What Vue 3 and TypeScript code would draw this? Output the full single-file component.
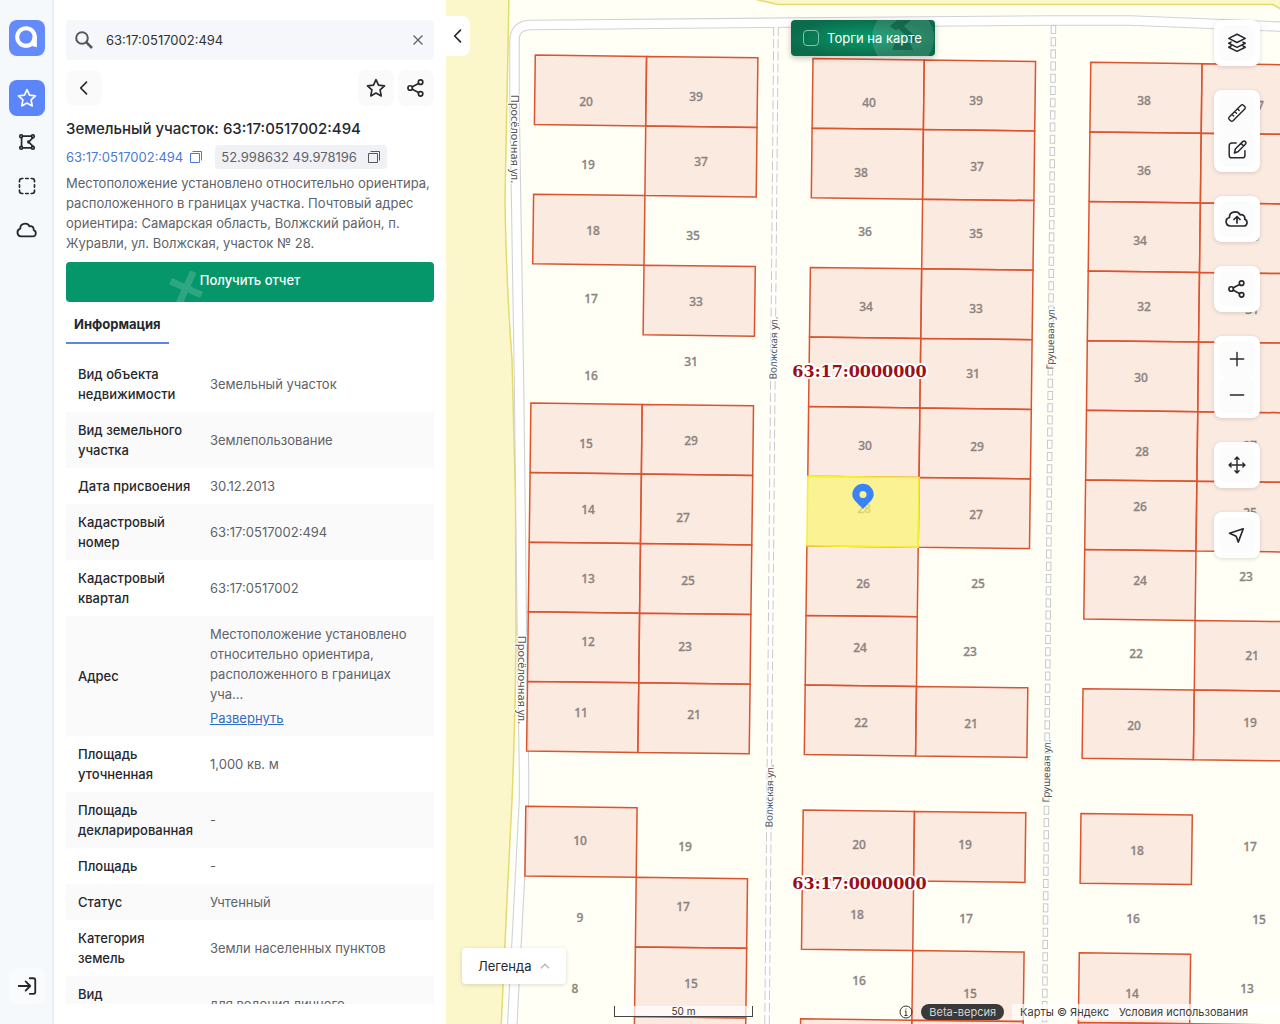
<script setup lang="ts">
import { ref } from 'vue'

interface Row { label: string; value: string; link?: string }

const rows: Row[] = [
  { label: 'Вид объекта недвижимости', value: 'Земельный участок' },
  { label: 'Вид земельного участка', value: 'Землепользование' },
  { label: 'Дата присвоения', value: '30.12.2013' },
  { label: 'Кадастровый номер', value: '63:17:0517002:494' },
  { label: 'Кадастровый квартал', value: '63:17:0517002' },
  { label: 'Адрес', value: 'Местоположение установлено относительно ориентира, расположенного в границах уча...', link: 'Развернуть' },
  { label: 'Площадь уточненная', value: '1,000 кв. м' },
  { label: 'Площадь декларированная', value: '-' },
  { label: 'Площадь', value: '-' },
  { label: 'Статус', value: 'Учтенный' },
  { label: 'Категория\nземель', value: 'Земли населенных пунктов' },
  { label: 'Вид\nразрешенного\nиспользования', value: 'для ведения личного подсобного хозяйства' },
]

const query = ref('63:17:0517002:494')
const auctions = ref(false)

type Point = [number, number]

// Every block is a two-column grid of plots, slightly rotated
const across: Point = [111.3, 1.4]
const down: Point = [-0.87, 69.6]

interface Block { origin: Point; left: number[]; right: number[] }

const blocks: Block[] = [
  { origin: [535.3, 55], left: [0, 2, 5, 6, 7, 8, 9], right: [0, 1, 3, 5, 6, 7, 8, 9] },
  { origin: [813, 58.6], left: [0, 1, 3, 4, 5, 7, 8, 9], right: [0, 1, 2, 3, 4, 5, 6, 9] },
  { origin: [1090.8, 62.3], left: [0, 1, 2, 3, 4, 5, 6, 7, 9], right: [0, 1, 2, 3, 4, 5, 6, 8, 9] },
  { origin: [525.8, 806.3], left: [0], right: [1, 2, 3] },
  { origin: [803.2, 810], left: [0, 1, 3], right: [0, 2, 3] },
  { origin: [1081, 813.6], left: [0, 2, 3], right: [3] },
]

function plot(origin: Point, col: number, row: number): string {
  const corner = (c: number, r: number) =>
    `${(origin[0] + across[0] * c + down[0] * r).toFixed(1)},${(origin[1] + across[1] * c + down[1] * r).toFixed(1)}`
  return [corner(col, row), corner(col + 1, row), corner(col + 1, row + 1), corner(col, row + 1)].join(' ')
}

const plots = blocks.flatMap((b) => [
  ...b.left.map((r) => plot(b.origin, 0, r)),
  ...b.right.map((r) => plot(b.origin, 1, r)),
])
const selected = plot(blocks[1].origin, 0, 6)

// House numbers: x centre, y centre, number
const houses: [number, number, number][] = [
  [586, 101, 20], [696, 96, 39], [588, 164, 19], [701, 161, 37], [593, 230, 18], [693, 235, 35],
  [591, 298, 17], [696, 301, 33], [591, 375, 16], [691, 361, 31], [586, 443, 15], [691, 440, 29],
  [588, 509, 14], [683, 517, 27], [588, 578, 13], [688, 580, 25], [588, 641, 12], [685, 646, 23],
  [581, 712, 11], [694, 714, 21], [580, 840, 10], [685, 846, 19], [580, 917, 9], [683, 906, 17],
  [575, 988, 8], [691, 983, 15],
  [869, 102, 40], [976, 100, 39], [861, 172, 38], [977, 166, 37], [865, 231, 36], [976, 233, 35],
  [866, 306, 34], [976, 308, 33], [973, 373, 31], [865, 445, 30], [977, 446, 29], [864, 508, 28],
  [976, 514, 27], [863, 583, 26], [978, 583, 25], [860, 647, 24], [970, 651, 23], [861, 722, 22],
  [971, 723, 21], [859, 844, 20], [965, 844, 19], [857, 914, 18], [966, 918, 17], [859, 980, 16],
  [970, 993, 15],
  [1144, 100, 38], [1257, 105, 37], [1144, 170, 36], [1140, 240, 34], [1252, 236, 33], [1144, 306, 32],
  [1252, 309, 31], [1141, 377, 30], [1142, 451, 28], [1250, 445, 27], [1140, 506, 26], [1250, 512, 25],
  [1140, 580, 24], [1246, 576, 23], [1136, 653, 22], [1252, 655, 21], [1134, 725, 20], [1250, 722, 19],
  [1137, 850, 18], [1250, 846, 17], [1133, 918, 16], [1259, 919, 15], [1132, 993, 14], [1247, 988, 13],
]

interface Street { name: string; x: number; y: number; turn: number; size: number }

const streets: Street[] = [
  { name: 'Просёлочная ул.', x: 515, y: 139, turn: 90, size: 11 },
  { name: 'Просёлочная ул.', x: 522, y: 680, turn: 90, size: 11 },
  { name: 'Волжская ул.', x: 773, y: 348, turn: -89, size: 10 },
  { name: 'Волжская ул.', x: 769, y: 796, turn: -89, size: 10 },
  { name: 'Грушевая ул.', x: 1050, y: 338, turn: -89, size: 10 },
  { name: 'Грушевая ул.', x: 1046, y: 771, turn: -89, size: 10 },
]
</script>

<template>
  <div class="app">
    <nav class="rail">
      <a class="logo" href="#" aria-label="Главная">
        <svg width="36" height="36" viewBox="0 0 36 36"><circle cx="17" cy="17" r="8.800" fill="none" stroke="#fff" stroke-width="4" /><path d="M24 16h3.800v11.200L21 25.500z" fill="#fff" /></svg>
      </a>
      <button class="rail-btn active" aria-label="Избранное">
        <svg class="ico" width="20" height="20" viewBox="0 0 24 24"><path d="M12 2l3 6.600 7.200.8-5.300 4.900 1.400 7.200L12 18l-6.300 3.500 1.400-7.200L1.800 9.400 9 8.600z" /></svg>
      </button>
      <button class="rail-btn" aria-label="Участок">
        <svg class="ico" width="20" height="20" viewBox="0 0 24 24"><path d="M6.500 5h11M5.500 7v10M6.500 19h11M19 7l-5 5 5 5" /><circle cx="5" cy="5" r="1.700" /><circle cx="19" cy="5" r="1.700" /><circle cx="5" cy="19" r="1.700" /><circle cx="19" cy="19" r="1.700" /><circle cx="14" cy="12" r="1" /></svg>
      </button>
      <button class="rail-btn" aria-label="Выделение">
        <svg class="ico" width="20" height="20" viewBox="0 0 24 24"><path d="M3 7V6a3 3 0 0 1 3-3h1M10.500 3h3M17 3h1a3 3 0 0 1 3 3v1M21 10.500v3M21 17v1a3 3 0 0 1-3 3h-1M13.500 21h-3M7 21H6a3 3 0 0 1-3-3v-1M3 13.500v-3" /></svg>
      </button>
      <button class="rail-btn" aria-label="Облако">
        <svg class="ico" width="22" height="22" viewBox="0 0 24 24"><path d="M5.500 19a4.300 4.300 0 0 1-.8-8.400c-.6-5.800 7.600-7.400 10-2.700 3-.7 5 1.500 4.600 4.300 3.500 1.300 2.800 6.800-.8 6.800z" /></svg>
      </button>
      <button class="rail-btn login" aria-label="Войти">
        <svg class="ico" width="22" height="22" viewBox="0 0 24 24"><path d="M3 12h12M10.500 7l5 5-5 5M15 3.500h4a2 2 0 0 1 2 2v13a2 2 0 0 1-2 2h-4" /></svg>
      </button>
    </nav>

    <aside class="panel">
      <form class="search" @submit.prevent>
        <svg width="20" height="20" viewBox="0 0 20 20" fill="none" stroke="#54585b" stroke-width="2"><circle cx="8" cy="8" r="5.800" /><path d="M12.200 12.200L18 18" stroke-width="2.600" /></svg>
        <input v-model="query" type="text" aria-label="Поиск">
        <button type="button" aria-label="Очистить" @click="query = ''">
          <svg width="12" height="12" viewBox="0 0 12 12" fill="none" stroke="#5d6266" stroke-width="1.300"><path d="M1.500 1.500l9 9M10.500 1.500l-9 9" /></svg>
        </button>
      </form>

      <div class="actions">
        <button class="soft" aria-label="Назад">
          <svg class="ico" width="20" height="20" viewBox="0 0 24 24"><path d="M15 5l-7 7 7 7" /></svg>
        </button>
        <button class="soft push" aria-label="В избранное">
          <svg class="ico" width="20" height="20" viewBox="0 0 24 24"><path d="M12 2l3 6.600 7.200.8-5.300 4.900 1.400 7.200L12 18l-6.300 3.500 1.400-7.200L1.800 9.400 9 8.600z" /></svg>
        </button>
        <button class="soft" aria-label="Поделиться">
          <svg class="ico" width="20" height="20" viewBox="0 0 24 24"><circle cx="5" cy="12" r="2.700" /><circle cx="17.500" cy="5" r="2.700" /><circle cx="17.500" cy="19" r="2.700" /><path d="M7.600 10.500L15 6.500M7.600 13.500l7.400 4" /></svg>
        </button>
      </div>

      <h1>Земельный участок: 63:17:0517002:494</h1>
      <div class="ids">
        <a href="#">63:17:0517002:494</a>
        <button class="copy blue" aria-label="Скопировать номер">
          <svg width="14" height="14" viewBox="0 0 14 14"><path d="M1.500 3.500h9v9h-9zM3.500 1.500h9v9" /></svg>
        </button>
        <span class="chip">
          52.998632 49.978196
          <button class="copy" aria-label="Скопировать координаты">
            <svg width="14" height="14" viewBox="0 0 14 14"><path d="M1.500 3.500h9v9h-9zM3.500 1.500h9v9" /></svg>
          </button>
        </span>
      </div>
      <p class="about">Местоположение установлено относительно ориентира, расположенного в границах участка. Почтовый адрес ориентира: Самарская область, Волжский район, п. Журавли, ул. Волжская, участок № 28.</p>
      <button class="report">
        <svg width="40" height="40" viewBox="0 0 40 40"><path d="M20 8v36M3 26h34" transform="rotate(24 20 26)" stroke="#fff" stroke-opacity=".16" stroke-width="7" /></svg>
        Получить отчет
      </button>
      <div class="tabs"><button class="tab">Информация</button></div>

      <div class="scroll">
        <table>
          <tbody>
            <tr v-for="row in rows" :key="row.label">
              <th scope="row">{{ row.label }}</th>
              <td>
                {{ row.value }}
                <a v-if="row.link" class="more" href="#">{{ row.link }}</a>
              </td>
            </tr>
          </tbody>
        </table>
      </div>
    </aside>

    <main class="map">
      <svg class="canvas" viewBox="446 0 834 1024" preserveAspectRatio="xMinYMin slice">
        <rect x="446" width="2000" height="2000" fill="#fffff6" />
        <g fill="#fbf7cb" stroke="#e3da70" stroke-width="1.500">
          <path d="M440-5H509L505 200Q506 280 512 360L515.500 500L516 640Q515 730 512 800L507 900L501 1030H440z" />
          <path d="M750-2L778 4.500H1273L1284 11V-4H750z" />
        </g>
        <g fill="none" stroke-linejoin="round">
          <path d="M512 1030L524 800V770L522 640L519 380L514.500 100V41Q514.500 25 531 25L800 22.500L1050 20.500L1130 20.500L1290 27" stroke="#d0d3d6" stroke-width="10.500" />
          <path d="M512 1030L524 800V770L522 640L519 380L514.500 100V41Q514.500 25 531 25L800 22.500L1050 20.500L1130 20.500L1290 27" stroke="#fff" stroke-width="8.300" />
          <path d="M776 27L767 1030M1053.500 25L1044.500 1030" stroke="#c8cac9" stroke-width="5.500" stroke-dasharray="9 3.200" />
          <path d="M776 27L767 1030" stroke="#fff" stroke-width="3.500" />
          <path d="M1053.500 26L1044.500 1030" stroke="#fff" stroke-width="3.500" stroke-dasharray="7 5.200" />
        </g>
        <g class="streets">
          <text v-for="(s, i) in streets" :key="i" :transform="`translate(${s.x} ${s.y}) rotate(${s.turn})`" :font-size="s.size" text-anchor="middle" dy="4">{{ s.name }}</text>
        </g>
        <g fill="#f7d9cd" fill-opacity=".55" stroke="#d9542f" stroke-width="1.500">
          <polygon v-for="p in plots" :key="p" :points="p" />
        </g>
        <g class="houses">
          <text v-for="(h, i) in houses" :key="i" :x="h[0]" :y="h[1] + 5">{{ h[2] }}</text>
        </g>
        <polygon :points="selected" fill="#f9ed72" fill-opacity=".75" stroke="#f7f02e" stroke-width="1.500" />
        <g class="quarters">
          <text x="859.500" y="377">63:17:0000000</text>
          <text x="859.500" y="889">63:17:0000000</text>
        </g>
        <path d="M863 509C858 503 852.300 500 852.300 494.500a10.700 10.700 0 0 1 21.400 0C873.700 500 868 503 863 509zM863 491a3.500 3.500 0 1 0 0 7 3.500 3.500 0 0 0 0-7z" fill="#3b82f6" />
      </svg>

      <button class="collapse" aria-label="Свернуть панель">
        <svg class="ico" width="20" height="20" viewBox="0 0 24 24"><path d="M15 5l-7 7 7 7" /></svg>
      </button>

      <label class="auction">
        <svg class="gavel" width="64" height="36" viewBox="0 0 64 36"><circle cx="32" cy="18" r="31" fill="#fff" fill-opacity=".13" /><path d="M19 6l7-6h14l-7 6 14 13-5 4-14-14-4 1zM24 23h15l3 7H21z" fill="#07563d" fill-opacity=".6" /></svg>
        <input v-model="auctions" type="checkbox">
        <span>Торги на карте</span>
      </label>

      <div class="tools">
        <div class="group">
          <button aria-label="Слои"><svg class="ico thin" width="22" height="22" viewBox="0 0 24 24"><path d="M12 2.500l9 4.500-9 4.500L3 7zM5.500 11L3 12.300l9 4.500 9-4.500-2.500-1.300M5.500 15.300L3 16.600l9 4.500 9-4.500-2.500-1.300" /></svg></button>
        </div>
        <div class="group">
          <button aria-label="Линейка"><svg class="ico thin" width="20" height="20" viewBox="0 0 24 24"><path d="M2.700 16.800L16.800 2.700a2 2 0 0 1 2.900 0l1.600 1.600a2 2 0 0 1 0 2.900L7.200 21.300a2 2 0 0 1-2.900 0l-1.600-1.600a2 2 0 0 1 0-2.900zM6 13.500l2 2M9.300 10.200l2 2M12.600 6.900l2 2" /></svg></button>
          <button aria-label="Редактировать"><svg class="ico thin" width="21" height="21" viewBox="0 0 24 24"><path d="M10.500 4.500H5.500a3 3 0 0 0-3 3v11a3 3 0 0 0 3 3h12a3 3 0 0 0 3-3v-5M9.500 11.500L18 3a2.100 2.100 0 0 1 3 3l-8.500 8.500L8.500 16zM16 5l3 3" /></svg></button>
        </div>
        <div class="group">
          <button aria-label="Загрузить"><svg class="ico thin" width="24" height="24" viewBox="0 0 24 24"><path d="M5.500 19a4.300 4.300 0 0 1-1-8.500c-.6-6 8-7.600 10.600-2.700 3-.7 5.200 1.500 4.600 4.300 3.700 1.500 2.700 6.900-1 6.900zM12 16v-6M9 12.500l3-3 3 3" /></svg></button>
        </div>
        <div class="group">
          <button aria-label="Поделиться картой"><svg class="ico" width="20" height="20" viewBox="0 0 24 24"><circle cx="5" cy="12" r="2.700" /><circle cx="17.500" cy="5" r="2.700" /><circle cx="17.500" cy="19" r="2.700" /><path d="M7.600 10.500L15 6.500M7.600 13.500l7.400 4" /></svg></button>
        </div>
        <div class="group">
          <button aria-label="Приблизить"><svg class="ico thin" width="20" height="20" viewBox="0 0 24 24"><path d="M4 12h16M12 4v16" /></svg></button>
          <button aria-label="Отдалить"><svg class="ico thin" width="20" height="20" viewBox="0 0 24 24"><path d="M4 12h16" /></svg></button>
        </div>
        <div class="group">
          <button aria-label="Переместить"><svg class="ico thin" width="20" height="20" viewBox="0 0 24 24"><path d="M3 12h18M12 3v18M9.500 5L12 2.500 14.500 5M9.500 19l2.500 2.500 2.500-2.500M5 9.500L2.500 12 5 14.500M19 9.500l2.500 2.500-2.500 2.500" /></svg></button>
        </div>
        <div class="group">
          <button aria-label="Моё местоположение"><svg class="ico" width="20" height="20" viewBox="0 0 24 24"><path d="M19.500 4.500L3 10l8 3.500 2.500 7z" /></svg></button>
        </div>
      </div>

      <button class="legend">
        Легенда
        <svg width="10" height="6" viewBox="0 0 10 6" fill="none" stroke="#b5b8bb" stroke-width="1.500"><path d="M1 5.200L5 1.200l4 4" /></svg>
      </button>

      <div class="scale">50 m</div>

      <footer class="credits">
        <svg width="14" height="14" viewBox="0 0 14 14" fill="none" stroke="#333"><circle cx="7" cy="7" r="6" /><path d="M5.800 6H7v4.500M5.500 10.500h3M7 3.500v1" /></svg>
        <span class="beta">Beta-версия</span>
        <span class="terms">
          <a href="#">Карты © Яндекс</a>
          <a href="#">Условия использования</a>
        </span>
      </footer>
    </main>
  </div>
</template>

<style>
body {
  margin: 0;
}
</style>

<style scoped>
.app {
  display: flex;
  height: 100vh;
  overflow: hidden;
  font: 400 13px/20px Inter, "Noto Sans", sans-serif;
  color: #5f6368;
  background: #fff;
}

button {
  display: flex;
  align-items: center;
  justify-content: center;
  padding: 0;
  border: 0;
  background: none;
  font: inherit;
  color: #26282b;
}

a {
  color: inherit;
  text-decoration: none;
}

.ico {
  fill: none;
  stroke: currentColor;
  stroke-width: 2;
  stroke-linecap: round;
  stroke-linejoin: round;
}

.ico.thin {
  stroke-width: 1.7;
}

.rail {
  flex: none;
  display: flex;
  flex-direction: column;
  align-items: center;
  gap: 8px;
  width: 54px;
  padding: 20px 0;
  background: #f5f9fb;
  box-shadow: inset -2px 0 #e9eff3;
}

.logo {
  height: 36px;
  margin-bottom: 16px;
  border-radius: 8px;
  background: #638bfb;
}

.rail-btn {
  flex: none;
  width: 36px;
  height: 36px;
  border-radius: 8px;
}

.rail-btn.active {
  color: #fff;
  background: #5b85fb;
}

.login {
  margin-top: auto;
  background: #fafbfc;
}

.panel {
  box-sizing: border-box;
  flex: none;
  display: flex;
  flex-direction: column;
  width: 392px;
  padding: 20px 12px;
}

.search {
  flex: none;
  display: flex;
  align-items: center;
  gap: 12px;
  height: 40px;
  padding: 0 10px 0 8px;
  border-radius: 4px;
  background: #f5f7fa;
}

.search input {
  flex: 1;
  min-width: 0;
  padding: 0;
  border: 0;
  outline: 0;
  background: none;
  font: inherit;
  color: #303336;
}

.actions {
  display: flex;
  gap: 4px;
  margin-top: 10px;
}

.soft {
  width: 36px;
  height: 36px;
  border-radius: 8px;
  background: #fafafb;
}

.push {
  margin-left: auto;
}

h1 {
  margin: 13px 0 6px;
  font-size: 15px;
  line-height: 20px;
  font-weight: 500;
  color: #26282b;
}

.ids {
  display: flex;
  align-items: center;
  height: 24px;
}

.ids a {
  color: #4a7ad8;
}

.copy {
  margin-left: 6px;
}

.copy svg {
  fill: none;
  stroke: #54585b;
}

.copy.blue svg {
  stroke: #4a7ad8;
}

.chip {
  display: flex;
  align-items: center;
  gap: 4px;
  height: 24px;
  margin-left: 12px;
  padding: 0 6px;
  border-radius: 4px;
  background: #eff1f5;
}

.about {
  margin: 4px 0 9px;
}

.report {
  position: relative;
  flex: none;
  height: 40px;
  padding-bottom: 4px;
  border-radius: 4px;
  background: #059669;
  color: #fff;
  font-weight: 500;
}

.report svg {
  position: absolute;
  left: 100px;
  top: 0;
}

.tabs {
  display: flex;
  margin-bottom: 12px;
}

.tab {
  box-sizing: border-box;
  height: 42px;
  padding: 4px 8px 0;
  border-bottom: 2px solid #5b85e8;
  font-weight: 700;
}

.scroll {
  flex: 1;
  min-height: 0;
  overflow: hidden;
}

table {
  width: 100%;
  table-layout: fixed;
  border-collapse: collapse;
}

tr:nth-child(even) {
  background: #fafafb;
}

th {
  width: 120px;
  padding: 8px 0 8px 12px;
  font-weight: 500;
  text-align: left;
  white-space: pre-line;
  color: #26282b;
}

td {
  padding: 8px 12px;
}

.more {
  display: block;
  margin-top: 4px;
  color: #2f6bc4;
  text-decoration: underline;
}

.map {
  position: relative;
  flex: 1;
  min-width: 0;
  overflow: hidden;
  background: #fffff6;
}

.canvas {
  display: block;
  width: 100%;
  height: 100%;
}

.streets text {
  font-family: "Noto Sans", sans-serif;
  fill: #555;
  stroke: #fff;
  stroke-width: 2px;
  paint-order: stroke;
}

.houses text {
  font: 500 12px "Noto Sans", sans-serif;
  fill: #8b8480;
  stroke: #8b8480;
  stroke-width: 0.3px;
  text-anchor: middle;
}

.quarters text {
  font: 700 16px "DejaVu Serif", serif;
  fill: #981018;
  stroke: #fff;
  stroke-width: 4px;
  paint-order: stroke;
  text-anchor: middle;
}

.collapse {
  position: absolute;
  left: 0;
  top: 16px;
  width: 24px;
  height: 40px;
  border-radius: 0 8px 8px 0;
  background: #fff;
}

.auction {
  position: absolute;
  left: 50%;
  top: 20px;
  box-sizing: border-box;
  display: flex;
  align-items: center;
  gap: 8px;
  width: 144px;
  height: 36px;
  margin-left: -72px;
  padding: 0 12px;
  border-radius: 4px;
  overflow: hidden;
  background: radial-gradient(ellipse at center, #079a6a, #0b6b4b 75%);
  box-shadow: 0 2px 6px rgba(0, 0, 0, 0.25);
  color: #fff;
  white-space: nowrap;
}

.auction .gavel {
  position: absolute;
  right: 0;
  top: 0;
}

.auction input {
  appearance: none;
  flex: none;
  width: 16px;
  height: 16px;
  margin: 0;
  border: 1px solid #7fc4aa;
  border-radius: 4px;
}

.auction span {
  position: relative;
}

.tools {
  position: absolute;
  right: 20px;
  top: 20px;
  display: flex;
  flex-direction: column;
  gap: 24px;
}

.group {
  padding: 5px;
  border-radius: 8px;
  background: #fff;
  box-shadow: 0 1px 4px rgba(0, 0, 0, 0.15);
}

.group button {
  width: 36px;
  height: 36px;
  border-radius: 8px;
  background: #fcfcfd;
}

.legend {
  position: absolute;
  left: 16px;
  bottom: 40px;
  gap: 8px;
  height: 36px;
  padding: 0 16px;
  border-radius: 4px;
  background: #fff;
  box-shadow: 0 1px 4px rgba(0, 0, 0, 0.15);
}

.scale {
  position: absolute;
  left: 168px;
  bottom: 7px;
  box-sizing: border-box;
  width: 139px;
  height: 11px;
  border: 1px solid #444;
  border-top: 0;
  background: rgba(255, 255, 255, 0.7);
  font-size: 10px;
  line-height: 10px;
  text-align: center;
  color: #333;
}

.credits {
  position: absolute;
  right: 0;
  bottom: 4px;
  display: flex;
  align-items: center;
  font-size: 11px;
  line-height: 16px;
  color: #3c3c3c;
}

.beta {
  margin: 0 8px;
  padding: 0 8px;
  border-radius: 8px;
  background: #3a3a3a;
  color: #d5d5d5;
}

.terms {
  display: flex;
  gap: 10px;
  padding: 0 32px 0 8px;
  background: rgba(255, 255, 255, 0.7);
}
</style>
